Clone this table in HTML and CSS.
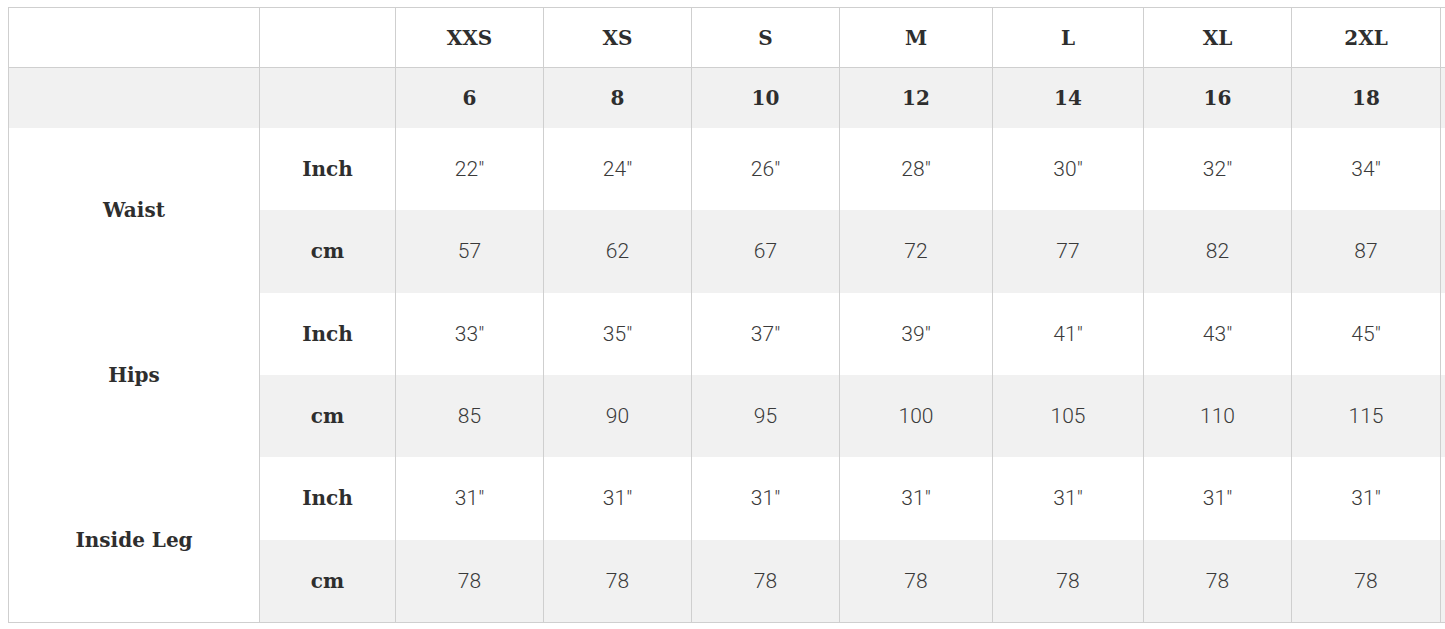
FILE: index.html
```html
<!DOCTYPE html>
<html>
<head>
<meta charset="utf-8">
<link rel="stylesheet" href="styles.css">
</head>
<body>
<div class="wrap">
<table class="chart">
  <colgroup>
    <col class="c-label"><col class="c-unit">
    <col class="c-148"><col class="c-148"><col class="c-148"><col class="c-153"><col class="c-151"><col class="c-148"><col class="c-149"><col class="c-148">
  </colgroup>
  <tr class="head">
    <th></th><th></th><th>XXS</th><th>XS</th><th>S</th><th>M</th><th>L</th><th>XL</th><th>2XL</th><th></th>
  </tr>
  <tr class="sub">
    <th></th><th></th><th>6</th><th>8</th><th>10</th><th>12</th><th>14</th><th>16</th><th>18</th><th></th>
  </tr>
  <tr class="data">
    <th rowspan="2">Waist</th><th>Inch</th><td>22"</td><td>24"</td><td>26"</td><td>28"</td><td>30"</td><td>32"</td><td>34"</td><td></td>
  </tr>
  <tr class="data alt">
    <th>cm</th><td>57</td><td>62</td><td>67</td><td>72</td><td>77</td><td>82</td><td>87</td><td></td>
  </tr>
  <tr class="data">
    <th rowspan="2">Hips</th><th>Inch</th><td>33"</td><td>35"</td><td>37"</td><td>39"</td><td>41"</td><td>43"</td><td>45"</td><td></td>
  </tr>
  <tr class="data alt">
    <th>cm</th><td>85</td><td>90</td><td>95</td><td>100</td><td>105</td><td>110</td><td>115</td><td></td>
  </tr>
  <tr class="data">
    <th rowspan="2">Inside Leg</th><th>Inch</th><td>31"</td><td>31"</td><td>31"</td><td>31"</td><td>31"</td><td>31"</td><td>31"</td><td></td>
  </tr>
  <tr class="data alt">
    <th>cm</th><td>78</td><td>78</td><td>78</td><td>78</td><td>78</td><td>78</td><td>78</td><td></td>
  </tr>
</table>
</div>
</body>
</html>
```
FILE: styles.css
```css
html, body {
  margin: 0;
  padding: 0;
  background: #ffffff;
}
.wrap {
  padding: 7px 0 0 8px;
  overflow: hidden;
  width: 1437px;
}
.chart {
  border-collapse: separate;
  border-spacing: 0;
  table-layout: fixed;
  width: 1581px;
  border-top: 1px solid #cfcfcf;
  border-left: 1px solid #cfcfcf;
  border-bottom: 1px solid #cfcfcf;
}
.c-label { width: 251px; }
.c-unit { width: 136px; }
.c-148 { width: 148px; }
.c-149 { width: 149px; }
.c-151 { width: 151px; }
.c-153 { width: 153px; }
.chart th, .chart td {
  box-sizing: border-box;
  padding: 0;
  text-align: center;
  vertical-align: middle;
  border-right: 1px solid #cfcfcf;
}
.chart th {
  font-family: "DejaVu Serif", "Liberation Serif", serif;
  font-weight: bold;
  font-size: 20px;
  color: #2e2e2e;
}
.chart td {
  font-family: Roboto, "Liberation Sans", sans-serif;
  font-weight: 300;
  font-size: 21px;
  color: #3a3a3a;
}
.head th {
  height: 60px;
  border-bottom: 1px solid #cfcfcf;
}
.sub {
  background: #f1f1f1;
}
.sub th {
  height: 60px;
}
.data th, .data td {
  height: 82.33px;
}
.alt {
  background: #f1f1f1;
}
```
